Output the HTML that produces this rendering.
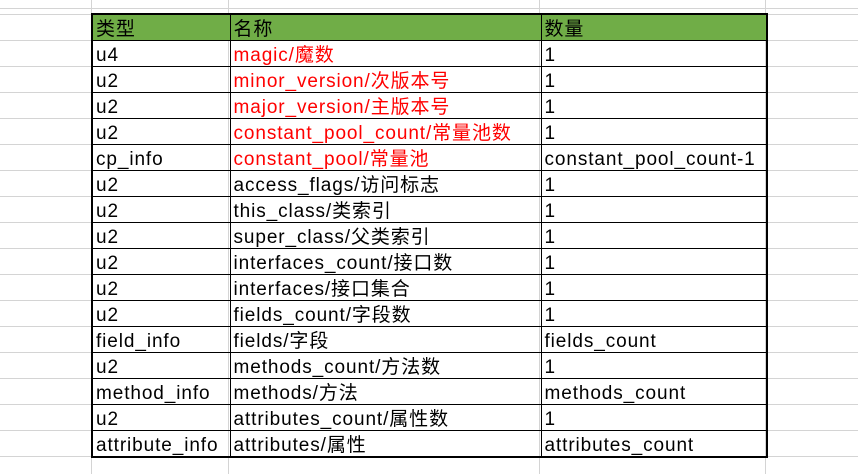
<!DOCTYPE html>
<html><head><meta charset="utf-8"><style>
html,body{margin:0;padding:0;width:858px;height:474px;overflow:hidden;background:#fff;}
body{position:relative;
background-image:
 linear-gradient(to right, transparent 91px, #d4d4d4 91px, #d4d4d4 92px, transparent 92px, transparent 228px, #d4d4d4 228px, #d4d4d4 229px, transparent 229px, transparent 539px, #d4d4d4 539px, #d4d4d4 540px, transparent 540px, transparent 765px,#d4d4d4 765px,#d4d4d4 766px, transparent 766px),
 repeating-linear-gradient(to bottom, #d4d4d4 0, #d4d4d4 1px, transparent 1px, transparent 26px);
background-position:0 0, 0 14px;
}
table{position:absolute;left:91px;top:13px;border-collapse:collapse;border:2px solid #000;font-family:"Liberation Sans","Noto Sans CJK SC",sans-serif;font-size:19px;letter-spacing:0.9px;color:#000;table-layout:fixed;}
td{border:1px solid #000;height:25px;padding:4px 0 0 3px;line-height:21px;white-space:nowrap;box-sizing:border-box;vertical-align:middle;overflow:hidden;}
td.a{width:138px}td.b{width:311px}td.c{width:226px}
tr.h td{background:#70ad47;}
.r{color:#ff0000}
</style></head><body>
<table>
<tr class="h"><td class="a">类型</td><td class="b">名称</td><td class="c">数量</td></tr>
<tr><td>u4</td><td class="r">magic/魔数</td><td>1</td></tr>
<tr><td>u2</td><td class="r">minor_version/次版本号</td><td>1</td></tr>
<tr><td>u2</td><td class="r">major_version/主版本号</td><td>1</td></tr>
<tr><td>u2</td><td class="r">constant_pool_count/常量池数</td><td>1</td></tr>
<tr><td>cp_info</td><td class="r">constant_pool/常量池</td><td>constant_pool_count-1</td></tr>
<tr><td>u2</td><td>access_flags/访问标志</td><td>1</td></tr>
<tr><td>u2</td><td>this_class/类索引</td><td>1</td></tr>
<tr><td>u2</td><td>super_class/父类索引</td><td>1</td></tr>
<tr><td>u2</td><td>interfaces_count/接口数</td><td>1</td></tr>
<tr><td>u2</td><td>interfaces/接口集合</td><td>1</td></tr>
<tr><td>u2</td><td>fields_count/字段数</td><td>1</td></tr>
<tr><td>field_info</td><td>fields/字段</td><td>fields_count</td></tr>
<tr><td>u2</td><td>methods_count/方法数</td><td>1</td></tr>
<tr><td>method_info</td><td>methods/方法</td><td>methods_count</td></tr>
<tr><td>u2</td><td>attributes_count/属性数</td><td>1</td></tr>
<tr><td>attribute_info</td><td>attributes/属性</td><td>attributes_count</td></tr>
</table>
</body></html>
